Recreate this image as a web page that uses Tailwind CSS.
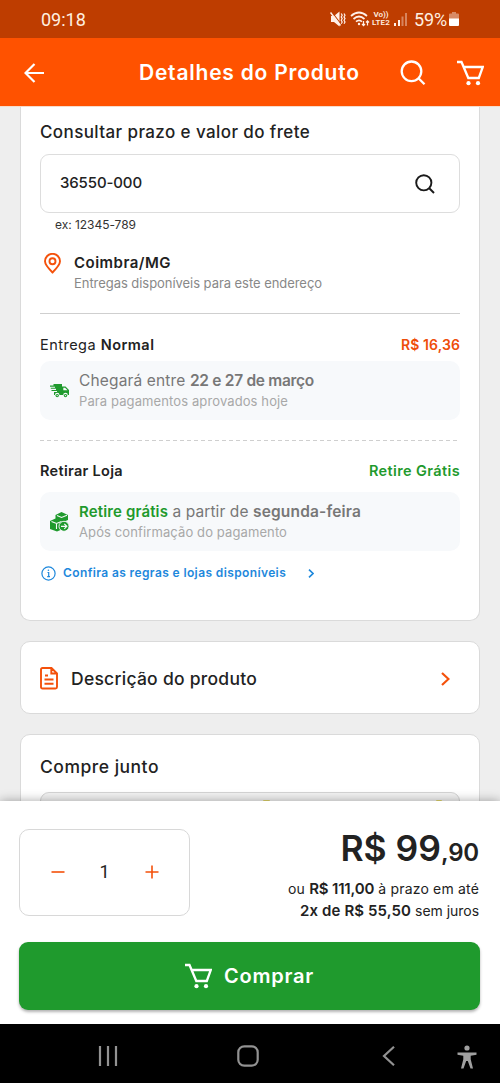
<!DOCTYPE html>
<html lang="pt-BR">
<head>
<meta charset="utf-8">
<title>Detalhes do Produto</title>
<script src="https://cdn.jsdelivr.net/npm/@tailwindcss/browser@4"></script>
</head>
<body class="bg-[#eeeeee] font-['Inter',sans-serif] text-[#222222]">
<div class="flex h-[1083px] w-[500px] flex-col overflow-hidden whitespace-nowrap">

  <!-- Status bar -->
  <div class="flex h-[38px] shrink-0 items-center bg-[#be3d00] pl-[41px] font-['Roboto',sans-serif] text-[18px] leading-none text-[#fff0e0]">
    <span class="w-[289px] pt-[2px]">09:18</span>
    <svg class="h-[18px] w-[16px]" viewBox="0 0 16 18" fill="none" stroke="#fff0e8" stroke-width="1.5">
      <path d="M1 6h3l5.500-4.500v15L4 12H1z" fill="#fff0e8" stroke="none"/>
      <path d="M1.500 1.500l9 12" stroke="#be3d00" stroke-width="1.200"/><path d="M.5 2.500l10 13"/>
      <path d="M11.200 3.500l1 1.700-1 1.700 1 1.700-1 1.700 1 1.700-1 1.700M14 3.500l1 1.700-1 1.700 1 1.700-1 1.700 1 1.700-1 1.700" stroke-width="1.200"/>
    </svg>
    <svg class="ml-[4px] h-[18px] w-[20px]" viewBox="0 0 20 18" fill="none" stroke="#fff0e8" stroke-width="1.700">
      <path d="M1 6q8-7 16 0M3.500 9q5.500-5 11 0M6 11.700q3-2.600 6 0"/>
      <circle cx="9" cy="14" r="1.200" fill="#fff0e8" stroke="none"/>
      <path d="M13.500 11v4.500M12 14l1.500 1.700L15 14M17.500 15.500V11M16 12.500l1.500-1.700 1.500 1.700" stroke-width="1.200"/>
    </svg>
    <div class="ml-[1px] flex w-[20px] flex-col items-center text-[8px] font-semibold leading-[8px]"><span>Vo))</span><span class="tracking-[0.1px]">LTE2</span></div>
    <svg class="ml-[3px] h-[14px] w-[13px]" viewBox="0 0 13 14" fill="#fff0e8">
      <path d="M0 11h2v3H0zM4 8h2v6H4z"/><path d="M7.500 4.500h2V14h-2zM11 1h2v13h-2z" opacity=".4"/>
    </svg>
    <span class="ml-[7px] w-[35px] pt-[2px] tracking-[-0.14px]">59%</span>
    <svg class="h-[16px] w-[10px]" viewBox="0 0 10 16" fill="#fff"><path d="M3 1h4v1.500h2q1 0 1 1V8H0V3.500q0-1 1-1h2z" opacity=".4"/><path d="M0 7.500h10V14q0 1-1 1H1q-1 0-1-1z"/></svg>
  </div>

  <!-- App bar -->
  <header class="flex h-[69px] shrink-0 items-center border-b border-[#f6dccb] bg-[#ff5200] pl-[24px] pt-px text-white">
    <svg class="h-[20px] w-[21px]" viewBox="0 0 21 20" fill="none" stroke="#fff" stroke-width="2.200"><path d="M20 10H2M10.500 1L1.500 10l9 9"/></svg>
    <h1 class="ml-[94px] w-[261px] text-[21px] font-semibold leading-[24px] tracking-[0.77px]">Detalhes do Produto</h1>
    <svg class="h-[26px] w-[26px]" viewBox="0 0 26 26" fill="none" stroke="#fff" stroke-width="2.300"><circle cx="11.500" cy="11.300" r="9.800"/><path d="M18.500 18.300l6 6"/></svg>
    <svg class="ml-[31px] h-[26px] w-[27px]" viewBox="0 0 27 26" fill="none" stroke="#fff" stroke-width="2.300"><path d="M0 2h4.500l6.800 16h10.500l4-11H7"/><circle cx="11.500" cy="23.200" r="2.100" fill="#fff" stroke="none"/><circle cx="21" cy="23.200" r="2.100" fill="#fff" stroke="none"/></svg>
  </header>

  <!-- Page content -->
  <main class="flex h-[694px] shrink-0 flex-col overflow-hidden px-[20px]">
    <section class="h-[514px] shrink-0 rounded-b-[10px] border border-t-0 border-[#dadada] bg-white px-[19px]">
      <h2 class="pt-[13px] text-[17px] font-medium leading-[24px] tracking-[0.4px]">Consultar prazo e valor do frete</h2>
      <div class="mt-[10px] flex h-[59px] w-[420px] items-center justify-between rounded-[9px] border border-[#dddddd] pl-[19px] pr-[24px]">
        <span class="pb-[2px] text-[15px] font-medium leading-[20px] tracking-[-0.12px]">36550-000</span>
        <svg class="h-[20px] w-[20px]" viewBox="0 0 20 20" fill="none" stroke="#1a1a1a" stroke-width="1.900"><circle cx="8.800" cy="8.800" r="7.600"/><path d="M14 14l5 5"/></svg>
      </div>
      <p class="mt-[3px] pl-[15px] text-[12px] leading-[18px] tracking-[-0.04px] text-[#333]">ex: 12345-789</p>
      <div class="mt-[19px] flex pl-[4px]">
        <svg class="h-[21px] w-[17px] shrink-0" viewBox="0 0 17 21" fill="none" stroke="#f4510b" stroke-width="1.900"><path d="M8.500 19.500C4.500 15.500 1 12 1 8.300a7.500 7.500 0 0 1 15 0c0 3.700-3.500 7.200-7.500 11.200z"/><circle cx="8.500" cy="8.200" r="3"/></svg>
        <div class="ml-[13px]">
          <p class="text-[15px] font-semibold leading-[20px] tracking-[0.48px]">Coimbra/MG</p>
          <p class="text-[13px] leading-[20px] tracking-[-0.05px] text-[#888]">Entregas disponíveis para este endereço</p>
        </div>
      </div>
      <div class="mt-[20px] h-[1px] w-[420px] bg-[#cfcfcf]"></div>

      <div class="mt-[21px] flex w-[420px] justify-between text-[14.5px] leading-[20px]">
        <p class="tracking-[0.48px]">Entrega <b class="font-semibold">Normal</b></p>
        <p class="text-[14px] font-semibold tracking-[0.1px] text-[#ee4d0a]">R$ 16,36</p>
      </div>
      <div class="mt-[6px] flex h-[59px] w-[420px] items-center rounded-[10px] bg-[#f7f9fb] pl-[10px]">
        <svg class="h-[14px] w-[19px]" viewBox="0 0 19 14" fill="#1f9a2d"><path d="M3.500 0H12v2.500h3.500L19 6v5h-1.200a2.300 2.300 0 0 0-4.600 0H9.500a2.300 2.300 0 0 0-4.600 0H4V8h3V7H1.500V6H6V4.800H.800V3.800H5V2.800H0V1.500h3.500z"/><path d="M13.300 3.800h1.800L17.500 6.200h-4.200z" fill="#f7f9fb"/><circle cx="7.200" cy="11.600" r="1.700"/><circle cx="15.500" cy="11.600" r="1.700"/><circle cx="7.200" cy="11.600" r=".7" fill="#f7f9fb"/><circle cx="15.500" cy="11.600" r=".7" fill="#f7f9fb"/></svg>
        <div class="ml-[10px] pt-[1px]">
          <p class="text-[15.5px] leading-[20px] tracking-[0.15px] text-[#777]">Chegará entre <b class="font-semibold tracking-[-0.29px]">22 e 27 de março</b></p>
          <p class="text-[13px] leading-[20px] tracking-[0.11px] text-[#a8a8a8]">Para pagamentos aprovados hoje</p>
        </div>
      </div>
      <svg class="mt-[20px] h-[1px] w-[420px]" viewBox="0 0 420 1"><path d="M0 .5h420" stroke="#cfcfcf" stroke-dasharray="4 3"/></svg>

      <div class="mt-[20px] flex w-[420px] justify-between text-[14.5px] font-semibold leading-[20px]">
        <p class="tracking-[0.31px]">Retirar Loja</p>
        <p class="tracking-[0.38px] text-[#1f9a2d]">Retire Grátis</p>
      </div>
      <div class="mt-[11px] flex h-[59px] w-[420px] items-center rounded-[10px] bg-[#f7f9fb] pl-[10px]">
        <svg class="h-[20px] w-[19px]" viewBox="0 0 19 20" fill="#1f9a2d"><path d="M5.500 3l6-3 6.500 3v5l-5 2-7.500-3z"/><path d="M0 9l5.500-2.500L13 9v8l-6 2.500L0 17z"/><path d="M7 3.500l4.500 2L17 3.200M1.500 9.500l5 2 5-2M6.500 12v5" stroke="#f7f9fb" stroke-width="1.100" fill="none"/><circle cx="14" cy="14.300" r="5" stroke="#f7f9fb" stroke-width=".9"/><path d="M11 14.300h5.500M14.300 11.800l2.500 2.500-2.500 2.500" stroke="#f7f9fb" stroke-width="1.200" fill="none"/></svg>
        <div class="ml-[10px] pt-[1px]">
          <p class="text-[15.5px] leading-[20px] tracking-[0.09px] text-[#777]"><b class="text-[15px] font-semibold tracking-[0.14px] text-[#1f9a2d]">Retire grátis</b> a partir de <b class="font-semibold tracking-[0.16px]">segunda-feira</b></p>
          <p class="text-[13px] leading-[20px] tracking-[0.11px] text-[#a8a8a8]">Após confirmação do pagamento</p>
        </div>
      </div>
      <div class="mt-[12px] flex h-[20px] items-center pl-[1px] text-[#1e88dc]">
        <svg class="h-[15px] w-[15px]" viewBox="0 0 15 15" fill="none" stroke="#1e88dc" stroke-width="1.200"><circle cx="7.500" cy="7.500" r="6.600"/><path d="M6.500 6.500h1.200v4M6.200 10.600h2.800"/><circle cx="7.400" cy="4.200" r=".8" fill="#1e88dc" stroke="none"/></svg>
        <span class="ml-[7px] w-[245px] text-[12px] font-semibold leading-[20px] tracking-[0.38px]">Confira as regras e lojas disponíveis</span>
        <svg class="h-[9px] w-[6px]" viewBox="0 0 6 9" fill="none" stroke="#1e88dc" stroke-width="1.600"><path d="M1 .6l4 3.900-4 3.900"/></svg>
      </div>
    </section>

    <section class="mt-[20px] flex h-[73px] shrink-0 items-center rounded-[10px] border border-[#dadada] bg-white pl-[19px] pt-[2px]">
      <svg class="h-[23px] w-[18px]" viewBox="0 0 18 23" fill="none" stroke="#f4510b" stroke-width="1.900"><path d="M2.500 1h9L17 6.500V20q0 1.500-1.500 1.500h-13Q1 21.500 1 20V2.500Q1 1 2.500 1zM11.300 1v5.500H17M5 8.500h3M4.500 12.500h9M4.500 16.700h9"/></svg>
      <h2 class="ml-[13px] w-[370px] text-[17.5px] font-medium leading-[24px] tracking-[0.26px]">Descrição do produto</h2>
      <svg class="h-[14px] w-[9px]" viewBox="0 0 9 14" fill="none" stroke="#f4510b" stroke-width="2.200"><path d="M1 1l6.500 6L1 13"/></svg>
    </section>

    <section class="mt-[20px] h-[120px] shrink-0 rounded-[10px] border border-[#dadada] bg-white px-[19px]">
      <h2 class="pt-[20px] text-[17.5px] font-medium leading-[24px] tracking-[0.5px]">Compre junto</h2>
      <div class="mt-[13px] flex h-[60px] w-[420px] justify-between rounded-[9px] border border-[#d4d4d4] bg-[#f2f2f2] pl-[222px] pr-[17px] pt-[7px]">
        <span class="h-[2px] w-[7px] rounded-full bg-[#e0d56a]"></span>
        <span class="h-[2px] w-[6px] rounded-full bg-[#e0d56a]"></span>
      </div>
    </section>
  </main>

  <!-- Purchase bar -->
  <section class="relative h-[223px] shrink-0 bg-white px-[19px] pt-[28px] shadow-[0_0_10px_rgba(0,0,0,0.35)]">
    <div class="flex h-[87px] justify-between">
      <div class="flex h-[87px] w-[171px] items-center rounded-[10px] border border-[#d8d8d8] pb-px pl-[31px]">
        <svg class="h-[14px] w-[14px]" viewBox="0 0 14 14" stroke="#f4510b" stroke-width="1.600"><path d="M.5 7h13"/></svg>
        <span class="flex w-[80px] justify-center pr-px font-['Roboto',sans-serif] text-[18px] leading-[20px]">1</span>
        <svg class="h-[14px] w-[14px]" viewBox="0 0 14 14" stroke="#f4510b" stroke-width="1.600"><path d="M.5 7h13M7 .5v13"/></svg>
      </div>
      <div class="mr-[2px] text-right">
        <p class="h-[40px] text-[35.5px] font-semibold leading-[40px]">R$ 99<span class="text-[24px] tracking-[-0.2px]">,90</span></p>
        <p class="mt-[9px] h-[22px] text-[14px] leading-[22px] tracking-[0.18px]">ou <b class="text-[15px] font-semibold tracking-[-0.17px]">R$ 111,00</b> à prazo em até</p>
        <p class="h-[22px] text-[14px] leading-[22px] tracking-[-0.03px]"><b class="text-[15px] font-semibold tracking-[0.11px]">2x de R$ 55,50</b> sem juros</p>
      </div>
    </div>
    <button class="mt-[26px] flex h-[68px] w-[461px] items-center rounded-[9px] bg-[#1f9a2d] pl-[166px] text-white shadow-[0_2px_3px_rgba(0,0,0,0.3)]">
      <svg class="h-[26px] w-[27px]" viewBox="0 0 27 26" fill="none" stroke="#fff" stroke-width="2.300"><path d="M0 2h4.500l6.800 16h10.500l4-11H7"/><circle cx="11.500" cy="23.200" r="2.100" fill="#fff" stroke="none"/><circle cx="21" cy="23.200" r="2.100" fill="#fff" stroke="none"/></svg>
      <span class="ml-[12px] text-[20px] font-semibold leading-[24px] tracking-[0.77px]">Comprar</span>
    </button>
  </section>

  <!-- System navigation -->
  <nav class="relative flex h-[59px] shrink-0 items-center bg-black pl-[98px] pt-[4px]">
    <svg class="h-[20px] w-[20px]" viewBox="0 0 20 20" stroke="#929292" stroke-width="2.200"><path d="M2 0v20M10 0v20M18 0v20"/></svg>
    <svg class="ml-[119px] h-[22px] w-[22px]" viewBox="0 0 22 22" fill="none" stroke="#929292" stroke-width="2.200"><rect x="1.300" y="1.300" width="19.400" height="19.400" rx="6"/></svg>
    <svg class="ml-[123px] h-[20px] w-[13px]" viewBox="0 0 13 20" fill="none" stroke="#929292" stroke-width="2.200"><path d="M12 .8L2 10l10 9.200"/></svg>
    <svg class="ml-[62px] mt-[3px] h-[24px] w-[20px]" viewBox="0 0 20 24" fill="#a0a0a0"><circle cx="10" cy="3" r="2.600"/><path d="M.5 7.500h19v2.300l-5.800 1v3.400L16 23.500h-2.500L10.800 16H9.200L6.500 23.500H4l2.300-9.300v-3.400l-5.800-1z"/></svg>
  </nav>
</div>
</body>
</html>
